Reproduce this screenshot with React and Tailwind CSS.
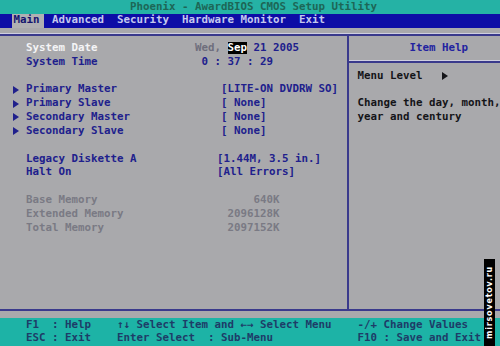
const C = {
  blue: "text-[#20208c]",
  gray: "text-[#7a7a84]",
};

const Arrow = ({ className = "" }) => (
  <svg width="6" height="8" viewBox="0 0 6 8" className={className}>
    <path d="M0 0L6 4L0 8Z" fill="currentColor" />
  </svg>
);

const Row = ({ arrow, label, labelClass = C.blue, children }) => (
  <div className="flex h-[13.84px] items-center">
    <span className={`flex w-[13px] ${C.blue}`}>{arrow && <Arrow />}</span>
    <span className={`w-[169px] whitespace-pre ${labelClass}`}>{label}</span>
    {children}
  </div>
);

const Blank = () => <div className="h-[13.84px]" />;

const Mem = ({ label, value }) => (
  <Row label={label} labelClass={C.gray}>
    <span className={`w-[84.5px] text-right ${C.gray}`}>{value}</span>
  </Row>
);

export default function App() {
  return (
    <div className="relative flex h-[346px] w-[500px] flex-col overflow-hidden bg-[#a9a9ac] font-['DejaVu_Sans_Mono',monospace] text-[10.8px] font-bold leading-none">
      {/* title */}
      <div className="flex h-[13.84px] items-center bg-[#25b2a5] pl-[130px] text-[#1d6656] whitespace-pre">
        Phoenix - AwardBIOS CMOS Setup Utility
      </div>

      {/* menu bar */}
      <div className="flex h-[13.84px] items-center bg-[#0d0da6] text-[#c4c8ee]">
        <span className="ml-[12px] flex h-full w-[32px] items-center bg-[#b0b0b2] pl-[1.5px] text-[#14146e]">
          Main
        </span>
        <span className="ml-[8px] whitespace-pre">Advanced  Security  Hardware Monitor  Exit</span>
      </div>

      {/* frame */}
      <div className="mt-[5.9px] flex h-[277.6px] border-y-2 border-[#3a3a8c] shadow-[0_-1px_0_#cfcfe0]">
        <div className="w-[348.7px] shrink-0 border-r-2 border-[#3a3a8c] pt-[5.9px] pl-[13px]">
          <Row label="System Date" labelClass="text-[#f4f4f6]">
            <span className="whitespace-pre text-[#6e6e7c]">Wed, </span>
            <span className="flex h-[12px] items-center bg-black text-white">Sep</span>
            <span className={`whitespace-pre ${C.blue}`}> 21 2005</span>
          </Row>
          <Row label="System Time">
            <span className={`whitespace-pre ${C.blue}`}> 0 : 37 : 29</span>
          </Row>
          <Blank />
          <Row arrow label="Primary Master">
            <span className={`ml-[26px] whitespace-pre ${C.blue}`}>[LITE-ON DVDRW SO]</span>
          </Row>
          <Row arrow label="Primary Slave">
            <span className={`ml-[26px] whitespace-pre ${C.blue}`}>[ None]</span>
          </Row>
          <Row arrow label="Secondary Master">
            <span className={`ml-[26px] whitespace-pre ${C.blue}`}>[ None]</span>
          </Row>
          <Row arrow label="Secondary Slave">
            <span className={`ml-[26px] whitespace-pre ${C.blue}`}>[ None]</span>
          </Row>
          <Blank />
          <Row label="Legacy Diskette A">
            <span className={`ml-[22px] whitespace-pre ${C.blue}`}>[1.44M, 3.5 in.]</span>
          </Row>
          <Row label="Halt On">
            <span className={`ml-[22px] whitespace-pre ${C.blue}`}>[All Errors]</span>
          </Row>
          <Blank />
          <Mem label="Base Memory" value="640K" />
          <Mem label="Extended Memory" value="2096128K" />
          <Mem label="Total Memory" value="2097152K" />
        </div>

        <div className="flex-1 pt-[5.9px]">
          <div className="flex h-[13.84px] items-center pl-[60.8px] text-[#2222a0]">Item Help</div>
          <div className="flex h-[13.84px] items-center">
            <div className="h-[2px] w-full bg-[#3a3a8c] shadow-[0_-1px_0_#cfcfe0]" />
          </div>
          <div className="flex h-[13.84px] items-center pl-[8.8px] text-[#141418]">
            <span className="w-[84.5px]">Menu Level</span>
            <Arrow />
          </div>
          <Blank />
          <div className="flex h-[13.84px] items-center whitespace-pre pl-[8.8px] text-[#141418]">
            Change the day, month,
          </div>
          <div className="flex h-[13.84px] items-center whitespace-pre pl-[8.8px] text-[#141418]">
            year and century
          </div>
        </div>
      </div>

      {/* key help */}
      <div className="mt-[6.9px] flex flex-1 flex-col bg-[#1db3a6] text-[#1e3c68]">
        <div className="flex h-[13.84px] items-center whitespace-pre pl-[26px]">
          <span className="w-[26px]">F1</span>
          <span className="w-[13px]">:</span>
          <span className="w-[52px]">Help</span>
          <span className="w-[240.5px]">↑↓ Select Item and ←→ Select Menu</span>
          <span>-/+ Change Values</span>
        </div>
        <div className="flex h-[13.84px] items-center whitespace-pre pl-[26px]">
          <span className="w-[26px]">ESC</span>
          <span className="w-[13px]">:</span>
          <span className="w-[52px]">Exit</span>
          <span className="w-[240.5px]">Enter Select  : Sub-Menu</span>
          <span>F10 : Save and Exit</span>
        </div>
      </div>

      {/* watermark */}
      <div className="absolute right-[5px] bottom-0 top-[259px] flex w-[11px] items-center justify-center bg-black">
        <span className="rotate-180 whitespace-pre font-['DejaVu_Sans',sans-serif] text-[8px] font-bold tracking-[0.8px] text-white [writing-mode:vertical-rl]">
          mirsovetov.ru
        </span>
      </div>
    </div>
  );
}
